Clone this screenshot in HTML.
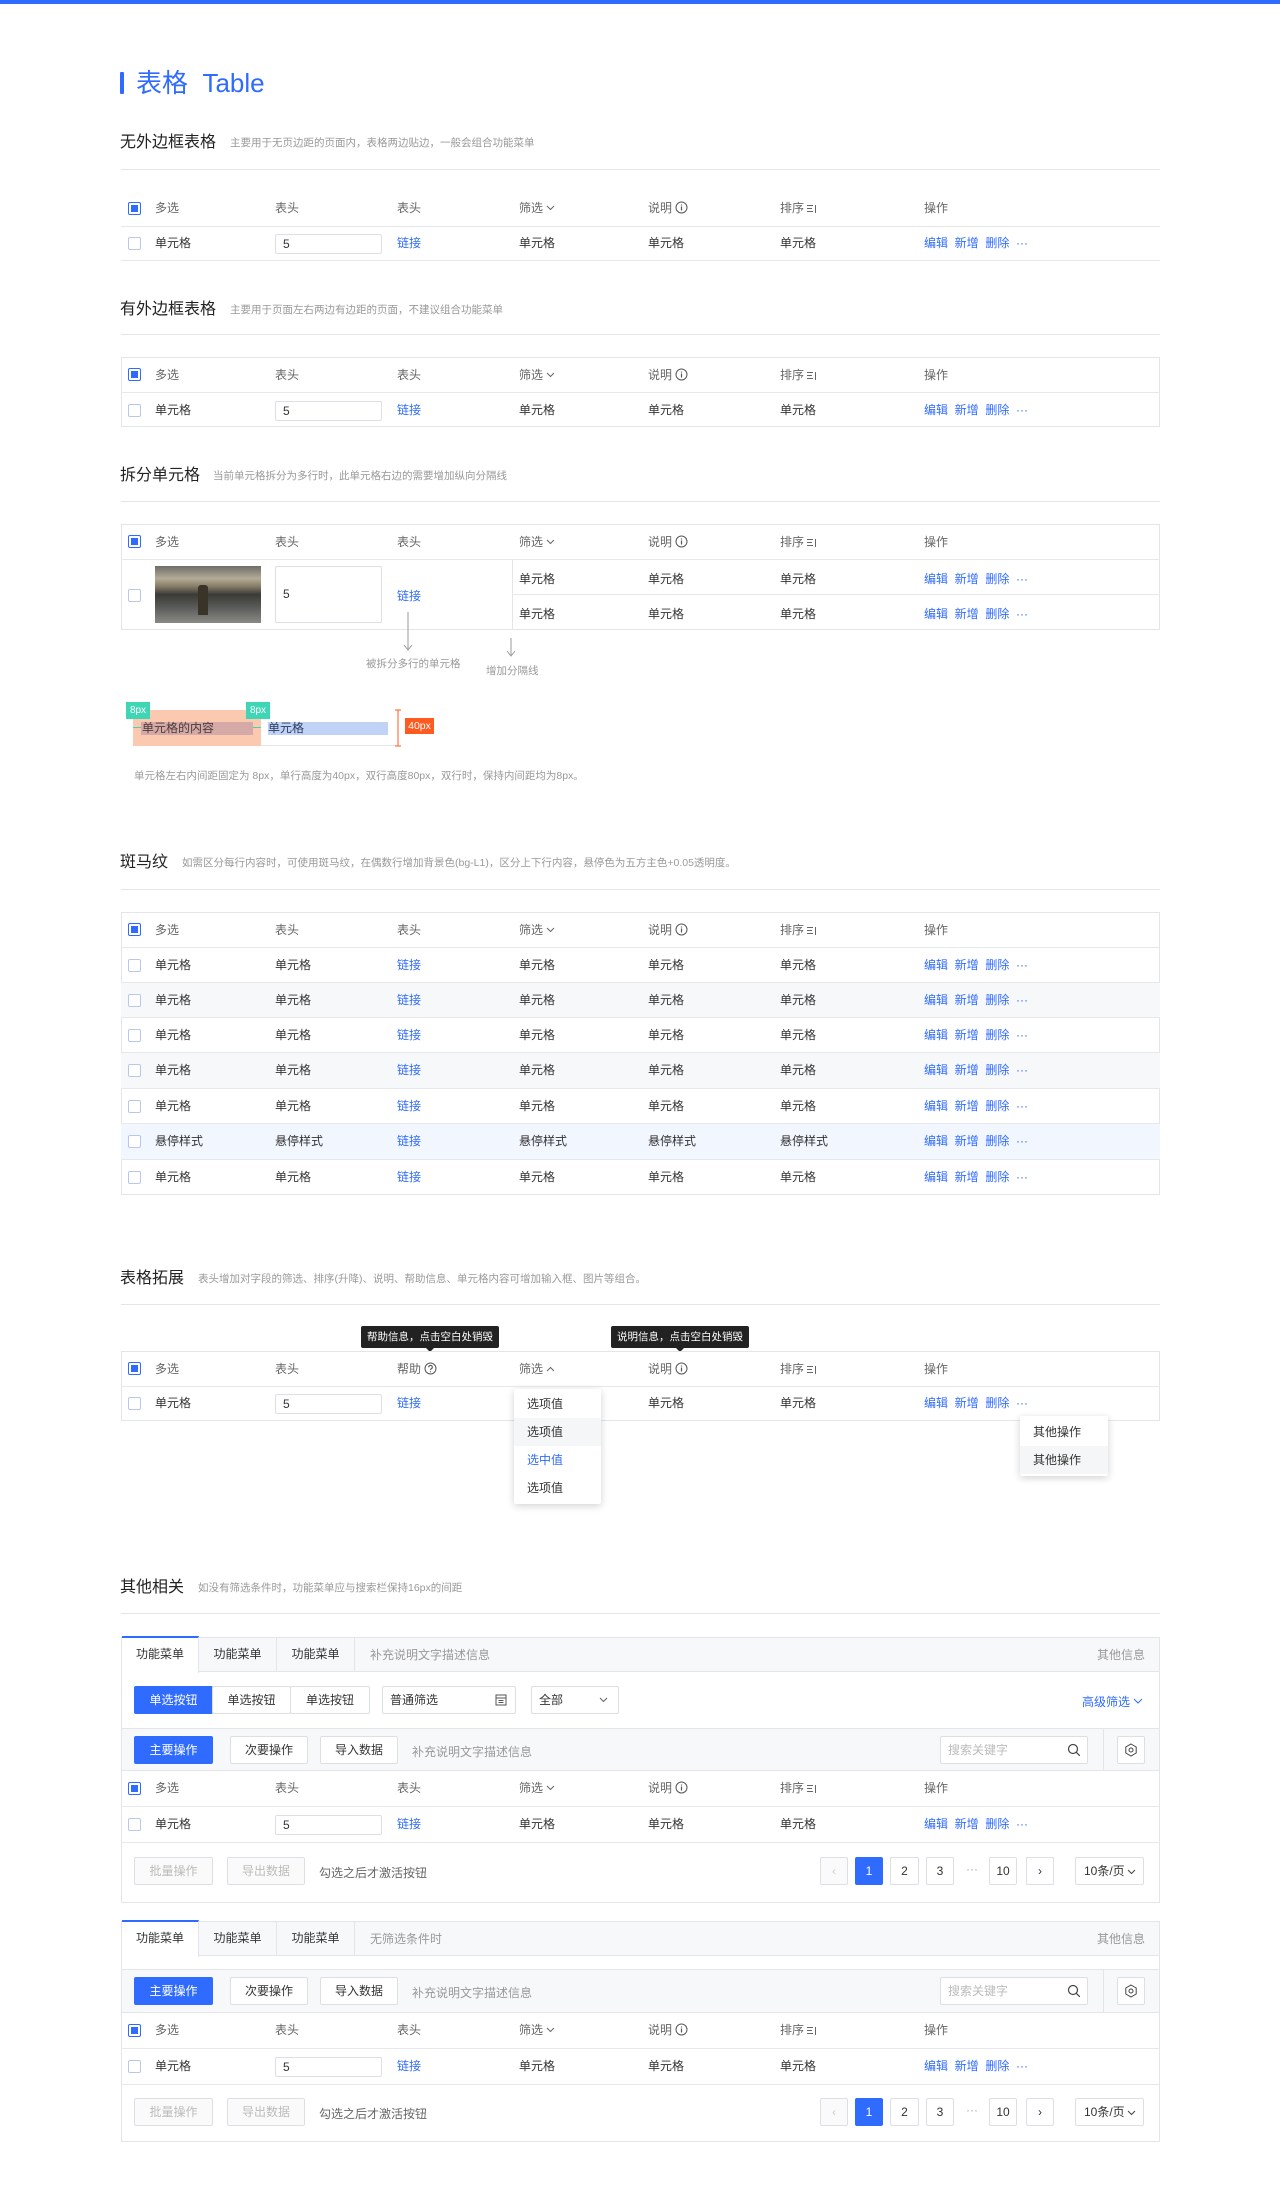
<!DOCTYPE html>
<html><head><meta charset="utf-8">
<style>
*{box-sizing:border-box;margin:0;padding:0}
body{width:1280px;height:2212px;position:relative;background:#fff;font-family:"Liberation Sans","Noto Sans CJK SC",sans-serif;color:#333;font-size:12px;overflow:hidden}
.a{position:absolute}
.topbar{left:0;top:0;width:1280px;height:4px;background:#2f6bff}
.h2{font-size:16px;color:#222;white-space:nowrap}
.desc{font-size:10.5px;color:#999;white-space:nowrap}
.hl{height:1px;background:#e3e5e8;left:121px;width:1039px}
.row{position:absolute;left:121px;width:1039px;border-bottom:1px solid #e6e8eb}
.row span.c{position:absolute;top:0;white-space:nowrap}
.hd span.c{color:#666}
.cb{position:absolute;left:7px;width:13px;height:13px;border:1px solid #b9c8ea;border-radius:2px;background:#fff}
.cb.on{border-color:#2f6bff}
.cb.on:after{content:"";position:absolute;left:2px;top:2px;width:7px;height:7px;background:#2f6bff}
.lk{color:#2f6bff}
.box{position:absolute;border:1px solid #e3e5e8}
.inp{position:absolute;border:1px solid #dcdfe4;border-radius:2px;background:#fff;padding-left:7px;font-size:12px;color:#333}
.btn{position:absolute;border:1px solid #dcdfe4;border-radius:2px;background:#fff;text-align:center;font-size:12px;color:#333;line-height:26px;height:28px}
.btn.p{background:#2f6bff;border-color:#2f6bff;color:#fff}
.btn.d{color:#bbb;background:#fafafa}
.tip{position:absolute;background:#222;color:#fff;font-size:10.5px;line-height:22px;height:22px;padding:0 6px;border-radius:2px;white-space:nowrap}
.tip:after{content:"";position:absolute;left:50%;margin-left:-4px;bottom:-4px;border:4px solid transparent;border-bottom:0;border-top-color:#222}
.dd{position:absolute;background:#fff;box-shadow:0 2px 8px rgba(0,0,0,.18);border-radius:2px}
.dd div{height:28px;line-height:28px;padding-left:13px;font-size:12px;color:#333}
svg{position:absolute}
</style></head><body>
<div class="a topbar"></div>
<div class="a" style="left:120px;top:72px;width:4px;height:22px;background:#2f6bff;border-radius:1px"></div>
<div class="a" style="left:136px;top:66px;font-size:26px;color:#2f6bff;line-height:34px;white-space:nowrap">表格&nbsp;&nbsp;Table</div>

<div class="a h2" style="left:120px;top:128px">无外边框表格</div><div class="a desc" style="left:230px;top:135px">主要用于无页边距的页面内，表格两边贴边，一般会组合功能菜单</div>
<div class="a hl" style="top:169px"></div>
<div class="a h2" style="left:120px;top:295px">有外边框表格</div><div class="a desc" style="left:230px;top:302px">主要用于页面左右两边有边距的页面，不建议组合功能菜单</div>
<div class="a hl" style="top:334px"></div>
<div class="a h2" style="left:120px;top:461px">拆分单元格</div><div class="a desc" style="left:213px;top:468px">当前单元格拆分为多行时，此单元格右边的需要增加纵向分隔线</div>
<div class="a hl" style="top:501px"></div>
<div class="a h2" style="left:120px;top:848px">斑马纹</div><div class="a desc" style="left:182px;top:855px">如需区分每行内容时，可使用斑马纹，在偶数行增加背景色(bg-L1)，区分上下行内容，悬停色为五方主色+0.05透明度。</div>
<div class="a hl" style="top:889px"></div>
<div class="a h2" style="left:120px;top:1264px">表格拓展</div><div class="a desc" style="left:198px;top:1271px">表头增加对字段的筛选、排序(升降)、说明、帮助信息、单元格内容可增加输入框、图片等组合。</div>
<div class="a hl" style="top:1304px"></div>
<div class="a h2" style="left:120px;top:1573px">其他相关</div><div class="a desc" style="left:198px;top:1580px">如没有筛选条件时，功能菜单应与搜索栏保持16px的间距</div>
<div class="a hl" style="top:1613px"></div>

<!-- Table 1 -->
<div class="row hd" style="top:191px;height:36px;line-height:35px"><i class="cb on" style="top:11px"></i><span class="c" style="left:34px">多选</span><span class="c" style="left:154px">表头</span><span class="c" style="left:276px">表头</span><span class="c" style="left:398px">筛选 <svg style="position:relative;display:inline-block;top:-1px" width="9" height="6"><path d="M1 1l3.5 3.5L8 1" fill="none" stroke="#666"/></svg></span><span class="c" style="left:527px">说明 <svg style="position:relative;display:inline-block;top:2px" width="13" height="13"><circle cx="6.5" cy="6.5" r="5.5" fill="none" stroke="#555"/><path d="M6.5 5.5v4M6.5 3.5v1" stroke="#555" stroke-width="1.2"/></svg></span><span class="c" style="left:659px">排序 <svg style="position:relative;display:inline-block;top:1px" width="10" height="9"><path d="M0 1.5h6M0 4.5h5M0 7.5h6M8.5 1v8" stroke="#666"/></svg></span><span class="c" style="left:803px">操作</span></div>
<div class="row" style="top:227px;height:34px;line-height:33px"><i class="cb" style="top:10px"></i><span class="c" style="left:34px">单元格</span><div class="inp" style="left:154px;top:7px;width:107px;height:20px;line-height:18px">5</div><span class="c lk" style="left:276px">链接</span><span class="c" style="left:398px">单元格</span><span class="c" style="left:527px">单元格</span><span class="c" style="left:659px">单元格</span><span class="c lk" style="left:803px">编辑&nbsp;&nbsp;新增&nbsp;&nbsp;删除&nbsp;&nbsp;···</span></div>

<!-- Table 2 -->
<div class="box" style="left:121px;top:357px;width:1039px;height:70px"></div>
<div class="row hd" style="top:358px;height:35px;line-height:34px"><i class="cb on" style="top:10px"></i><span class="c" style="left:34px">多选</span><span class="c" style="left:154px">表头</span><span class="c" style="left:276px">表头</span><span class="c" style="left:398px">筛选 <svg style="position:relative;display:inline-block;top:-1px" width="9" height="6"><path d="M1 1l3.5 3.5L8 1" fill="none" stroke="#666"/></svg></span><span class="c" style="left:527px">说明 <svg style="position:relative;display:inline-block;top:2px" width="13" height="13"><circle cx="6.5" cy="6.5" r="5.5" fill="none" stroke="#555"/><path d="M6.5 5.5v4M6.5 3.5v1" stroke="#555" stroke-width="1.2"/></svg></span><span class="c" style="left:659px">排序 <svg style="position:relative;display:inline-block;top:1px" width="10" height="9"><path d="M0 1.5h6M0 4.5h5M0 7.5h6M8.5 1v8" stroke="#666"/></svg></span><span class="c" style="left:803px">操作</span></div>
<div class="row" style="top:393px;height:34px;line-height:34px;border-bottom:0"><i class="cb" style="top:11px"></i><span class="c" style="left:34px">单元格</span><div class="inp" style="left:154px;top:8px;width:107px;height:20px;line-height:18px">5</div><span class="c lk" style="left:276px">链接</span><span class="c" style="left:398px">单元格</span><span class="c" style="left:527px">单元格</span><span class="c" style="left:659px">单元格</span><span class="c lk" style="left:803px">编辑&nbsp;&nbsp;新增&nbsp;&nbsp;删除&nbsp;&nbsp;···</span></div>

<!-- Table 3 split -->
<div class="box" style="left:121px;top:524px;width:1039px;height:106px"></div>
<div class="row hd" style="top:525px;height:35px;line-height:34px"><i class="cb on" style="top:10px"></i><span class="c" style="left:34px">多选</span><span class="c" style="left:154px">表头</span><span class="c" style="left:276px">表头</span><span class="c" style="left:398px">筛选 <svg style="position:relative;display:inline-block;top:-1px" width="9" height="6"><path d="M1 1l3.5 3.5L8 1" fill="none" stroke="#666"/></svg></span><span class="c" style="left:527px">说明 <svg style="position:relative;display:inline-block;top:2px" width="13" height="13"><circle cx="6.5" cy="6.5" r="5.5" fill="none" stroke="#555"/><path d="M6.5 5.5v4M6.5 3.5v1" stroke="#555" stroke-width="1.2"/></svg></span><span class="c" style="left:659px">排序 <svg style="position:relative;display:inline-block;top:1px" width="10" height="9"><path d="M0 1.5h6M0 4.5h5M0 7.5h6M8.5 1v8" stroke="#666"/></svg></span><span class="c" style="left:803px">操作</span></div>
<i class="cb" style="left:128px;top:589px"></i>
<div class="a" style="left:155px;top:566px;width:106px;height:57px;background:linear-gradient(180deg,#6e6c66 0%,#b3ab98 22%,#8a8068 35%,#3a3a36 50%,#5a5a58 72%,#8a8a86 100%)"></div>
<div class="a" style="left:198px;top:585px;width:10px;height:30px;background:#3a3428;border-radius:3px 3px 0 0"></div>
<div class="inp" style="left:275px;top:566px;width:107px;height:57px;line-height:55px">5</div>
<div class="a lk" style="left:397px;top:587px">链接</div>
<div class="a" style="left:512px;top:559px;width:1px;height:70px;background:#e3e5e8"></div>
<div class="a" style="left:512px;top:594px;width:648px;height:1px;background:#e6e8eb"></div>
<div class="a" style="left:519px;top:570px">单元格</div><div class="a" style="left:648px;top:570px">单元格</div><div class="a" style="left:780px;top:570px">单元格</div><div class="a lk" style="left:924px;top:570px;white-space:nowrap">编辑&nbsp;&nbsp;新增&nbsp;&nbsp;删除&nbsp;&nbsp;···</div>
<div class="a" style="left:519px;top:605px">单元格</div><div class="a" style="left:648px;top:605px">单元格</div><div class="a" style="left:780px;top:605px">单元格</div><div class="a lk" style="left:924px;top:605px;white-space:nowrap">编辑&nbsp;&nbsp;新增&nbsp;&nbsp;删除&nbsp;&nbsp;···</div>
<svg style="left:403px;top:612px" width="10" height="40"><path d="M5 0v38M1 33l4 5 4-5" fill="none" stroke="#999"/></svg>
<div class="a desc" style="left:366px;top:656px;color:#999">被拆分多行的单元格</div>
<svg style="left:506px;top:638px" width="10" height="20"><path d="M5 0v18M1 13l4 5 4-5" fill="none" stroke="#999"/></svg>
<div class="a desc" style="left:486px;top:663px">增加分隔线</div>

<!-- spacing diagram -->
<div class="a" style="left:133px;top:710px;width:128px;height:36px;background:#fbc9b0"></div>
<div class="a" style="left:141px;top:722px;width:112px;height:13px;background:#d4a9a6"></div>
<div class="a" style="left:142px;top:719px;font-size:12px;color:#4a3a3a">单元格的内容</div>
<div class="a" style="left:268px;top:722px;width:120px;height:13px;background:#c0d3f7"></div>
<div class="a" style="left:268px;top:719px;font-size:12px;color:#2a3a60">单元格</div>
<div class="a" style="left:261px;top:745px;width:135px;height:1px;background:#e3e5e8"></div>
<div class="a" style="left:126px;top:702px;width:24px;height:17px;background:#3ed6b4;color:#fff;font-size:10px;line-height:17px;text-align:center">8px</div>
<div class="a" style="left:246px;top:702px;width:24px;height:17px;background:#3ed6b4;color:#fff;font-size:10px;line-height:17px;text-align:center">8px</div>
<div class="a" style="left:133px;top:727px;width:8px;height:1px;background:#3ed6b4"></div>
<div class="a" style="left:253px;top:727px;width:8px;height:1px;background:#3ed6b4"></div>
<svg style="left:394px;top:709px" width="8" height="38"><path d="M4 1v36M1 1h6M1 37h6" stroke="#ff5a1f"/></svg>
<div class="a" style="left:405px;top:718px;width:29px;height:16px;background:#ff5a1f;color:#fff;font-size:10.5px;line-height:16px;text-align:center">40px</div>
<div class="a desc" style="left:134px;top:768px">单元格左右内间距固定为 8px，单行高度为40px，双行高度80px，双行时，保持内间距均为8px。</div>

<!-- Table 4 zebra -->
<div class="box" style="left:121px;top:912px;width:1039px;height:283px"></div>
<div class="row hd" style="top:913px;height:35px;line-height:34px"><i class="cb on" style="top:10px"></i><span class="c" style="left:34px">多选</span><span class="c" style="left:154px">表头</span><span class="c" style="left:276px">表头</span><span class="c" style="left:398px">筛选 <svg style="position:relative;display:inline-block;top:-1px" width="9" height="6"><path d="M1 1l3.5 3.5L8 1" fill="none" stroke="#666"/></svg></span><span class="c" style="left:527px">说明 <svg style="position:relative;display:inline-block;top:2px" width="13" height="13"><circle cx="6.5" cy="6.5" r="5.5" fill="none" stroke="#555"/><path d="M6.5 5.5v4M6.5 3.5v1" stroke="#555" stroke-width="1.2"/></svg></span><span class="c" style="left:659px">排序 <svg style="position:relative;display:inline-block;top:1px" width="10" height="9"><path d="M0 1.5h6M0 4.5h5M0 7.5h6M8.5 1v8" stroke="#666"/></svg></span><span class="c" style="left:803px">操作</span></div>
<div class="row" style="top:948px;height:35px;line-height:34px"><i class="cb" style="top:11px"></i><span class="c" style="left:34px">单元格</span><span class="c" style="left:154px">单元格</span><span class="c lk" style="left:276px">链接</span><span class="c" style="left:398px">单元格</span><span class="c" style="left:527px">单元格</span><span class="c" style="left:659px">单元格</span><span class="c lk" style="left:803px">编辑&nbsp;&nbsp;新增&nbsp;&nbsp;删除&nbsp;&nbsp;···</span></div>
<div class="row" style="top:983px;height:35px;line-height:34px;background:#f7f8fa"><i class="cb" style="top:11px"></i><span class="c" style="left:34px">单元格</span><span class="c" style="left:154px">单元格</span><span class="c lk" style="left:276px">链接</span><span class="c" style="left:398px">单元格</span><span class="c" style="left:527px">单元格</span><span class="c" style="left:659px">单元格</span><span class="c lk" style="left:803px">编辑&nbsp;&nbsp;新增&nbsp;&nbsp;删除&nbsp;&nbsp;···</span></div>
<div class="row" style="top:1018px;height:35px;line-height:34px"><i class="cb" style="top:11px"></i><span class="c" style="left:34px">单元格</span><span class="c" style="left:154px">单元格</span><span class="c lk" style="left:276px">链接</span><span class="c" style="left:398px">单元格</span><span class="c" style="left:527px">单元格</span><span class="c" style="left:659px">单元格</span><span class="c lk" style="left:803px">编辑&nbsp;&nbsp;新增&nbsp;&nbsp;删除&nbsp;&nbsp;···</span></div>
<div class="row" style="top:1053px;height:36px;line-height:35px;background:#f7f8fa"><i class="cb" style="top:11px"></i><span class="c" style="left:34px">单元格</span><span class="c" style="left:154px">单元格</span><span class="c lk" style="left:276px">链接</span><span class="c" style="left:398px">单元格</span><span class="c" style="left:527px">单元格</span><span class="c" style="left:659px">单元格</span><span class="c lk" style="left:803px">编辑&nbsp;&nbsp;新增&nbsp;&nbsp;删除&nbsp;&nbsp;···</span></div>
<div class="row" style="top:1089px;height:35px;line-height:34px"><i class="cb" style="top:11px"></i><span class="c" style="left:34px">单元格</span><span class="c" style="left:154px">单元格</span><span class="c lk" style="left:276px">链接</span><span class="c" style="left:398px">单元格</span><span class="c" style="left:527px">单元格</span><span class="c" style="left:659px">单元格</span><span class="c lk" style="left:803px">编辑&nbsp;&nbsp;新增&nbsp;&nbsp;删除&nbsp;&nbsp;···</span></div>
<div class="row" style="top:1124px;height:36px;line-height:35px;background:#f2f6ff"><i class="cb" style="top:11px"></i><span class="c" style="left:34px">悬停样式</span><span class="c" style="left:154px">悬停样式</span><span class="c lk" style="left:276px">链接</span><span class="c" style="left:398px">悬停样式</span><span class="c" style="left:527px">悬停样式</span><span class="c" style="left:659px">悬停样式</span><span class="c lk" style="left:803px">编辑&nbsp;&nbsp;新增&nbsp;&nbsp;删除&nbsp;&nbsp;···</span></div>
<div class="row" style="top:1160px;height:35px;line-height:34px;border-bottom:0"><i class="cb" style="top:11px"></i><span class="c" style="left:34px">单元格</span><span class="c" style="left:154px">单元格</span><span class="c lk" style="left:276px">链接</span><span class="c" style="left:398px">单元格</span><span class="c" style="left:527px">单元格</span><span class="c" style="left:659px">单元格</span><span class="c lk" style="left:803px">编辑&nbsp;&nbsp;新增&nbsp;&nbsp;删除&nbsp;&nbsp;···</span></div>

<!-- Table 5 extension -->
<div class="tip" style="left:361px;top:1326px">帮助信息，点击空白处销毁</div>
<div class="tip" style="left:611px;top:1326px">说明信息，点击空白处销毁</div>
<div class="box" style="left:121px;top:1351px;width:1039px;height:70px"></div>
<div class="row hd" style="top:1352px;height:35px;line-height:34px"><i class="cb on" style="top:10px"></i><span class="c" style="left:34px">多选</span><span class="c" style="left:154px">表头</span><span class="c" style="left:276px">帮助 <svg style="position:relative;display:inline-block;top:2px" width="13" height="13"><circle cx="6.5" cy="6.5" r="5.5" fill="none" stroke="#555"/><path d="M4.7 5.2a1.8 1.8 0 1 1 2.6 1.6c-.6.3-.8.6-.8 1.3M6.5 9.3v1" fill="none" stroke="#555" stroke-width="1.1"/></svg></span><span class="c" style="left:398px">筛选 <svg style="position:relative;display:inline-block;top:-1px" width="9" height="6"><path d="M1 5l3.5-3.5L8 5" fill="none" stroke="#666"/></svg></span><span class="c" style="left:527px">说明 <svg style="position:relative;display:inline-block;top:2px" width="13" height="13"><circle cx="6.5" cy="6.5" r="5.5" fill="none" stroke="#555"/><path d="M6.5 5.5v4M6.5 3.5v1" stroke="#555" stroke-width="1.2"/></svg></span><span class="c" style="left:659px">排序 <svg style="position:relative;display:inline-block;top:1px" width="10" height="9"><path d="M0 1.5h6M0 4.5h5M0 7.5h6M8.5 1v8" stroke="#666"/></svg></span><span class="c" style="left:803px">操作</span></div>
<div class="row" style="top:1386px;height:34px;line-height:34px;border-bottom:0"><i class="cb" style="top:11px"></i><span class="c" style="left:34px">单元格</span><div class="inp" style="left:154px;top:8px;width:107px;height:20px;line-height:18px">5</div><span class="c lk" style="left:276px">链接</span><span class="c" style="left:527px">单元格</span><span class="c" style="left:659px">单元格</span><span class="c lk" style="left:803px">编辑&nbsp;&nbsp;新增&nbsp;&nbsp;删除&nbsp;&nbsp;···</span></div>
<div class="dd" style="left:514px;top:1389px;width:87px;height:115px;padding-top:1px"><div>选项值</div><div style="background:#f5f6f7">选项值</div><div style="color:#2f6bff">选中值</div><div>选项值</div></div>
<div class="dd" style="left:1020px;top:1416px;width:88px;height:60px;padding-top:2px"><div>其他操作</div><div style="background:#f5f6f7">其他操作</div></div>

<!-- Panel 1 -->
<div class="box" style="left:121px;top:1637px;width:1039px;height:266px"></div>
<div class="a" style="left:122px;top:1638px;width:1037px;height:34px;background:#f7f8fa;border-bottom:1px solid #e3e5e8"></div>
<div class="a" style="left:122px;top:1636px;width:77px;height:37px;background:#fff;border-top:2px solid #2f6bff;border-right:1px solid #e3e5e8;text-align:center;line-height:33px">功能菜单</div>
<div class="a" style="left:199px;top:1638px;width:78px;height:34px;border-right:1px solid #e3e5e8;text-align:center;line-height:33px">功能菜单</div>
<div class="a" style="left:277px;top:1638px;width:78px;height:34px;border-right:1px solid #e3e5e8;text-align:center;line-height:33px">功能菜单</div>
<div class="a" style="left:370px;top:1646px;color:#999">补充说明文字描述信息</div>
<div class="a" style="left:1097px;top:1646px;color:#999">其他信息</div>
<div class="btn p" style="left:134px;top:1686px;width:79px">单选按钮</div>
<div class="btn" style="left:212px;top:1686px;width:79px">单选按钮</div>
<div class="btn" style="left:290px;top:1686px;width:80px">单选按钮</div>
<div class="inp" style="left:382px;top:1686px;width:134px;height:28px;line-height:26px">普通筛选</div>
<svg style="left:495px;top:1694px" width="12" height="12"><rect x="1" y="1" width="10" height="10" fill="none" stroke="#555"/><path d="M1 4h10M3.5 6.5h5M3.5 8.5h5" stroke="#555"/></svg>
<div class="inp" style="left:531px;top:1686px;width:88px;height:28px;line-height:26px">全部</div>
<svg style="left:599px;top:1697px" width="9" height="6"><path d="M1 1l3.5 3.5L8 1" fill="none" stroke="#666"/></svg>
<div class="a lk" style="left:1082px;top:1693px">高级筛选</div>
<svg style="left:1133px;top:1698px" width="10" height="6"><path d="M1 1l4 4 4-4" fill="none" stroke="#2f6bff"/></svg>
<div class="a" style="left:122px;top:1728px;width:1037px;height:43px;background:#f7f8fa;border-top:1px solid #e3e5e8;border-bottom:1px solid #e3e5e8"></div>
<div class="btn p" style="left:134px;top:1736px;width:79px">主要操作</div>
<div class="btn" style="left:230px;top:1736px;width:78px">次要操作</div>
<div class="btn" style="left:320px;top:1736px;width:78px">导入数据</div>
<div class="a" style="left:412px;top:1743px;color:#999">补充说明文字描述信息</div>
<div class="inp" style="left:940px;top:1736px;width:148px;height:28px;line-height:26px;color:#bbb">搜索关键字</div>
<svg style="left:1067px;top:1743px" width="14" height="14"><circle cx="6" cy="6" r="4.5" fill="none" stroke="#444" stroke-width="1.2"/><path d="M9.3 9.3l3.5 3.5" stroke="#444" stroke-width="1.2"/></svg>
<div class="a" style="left:1103px;top:1729px;width:1px;height:41px;background:#e3e5e8"></div>
<div class="btn" style="left:1117px;top:1736px;width:28px"></div>
<svg style="left:1124px;top:1743px" width="14" height="14"><path d="M7 1l5.2 3v6L7 13 1.8 10V4z" fill="none" stroke="#444"/><circle cx="7" cy="7" r="2" fill="none" stroke="#444"/></svg>
<div class="row hd" style="top:1771px;height:36px;line-height:35px"><i class="cb on" style="top:11px"></i><span class="c" style="left:34px">多选</span><span class="c" style="left:154px">表头</span><span class="c" style="left:276px">表头</span><span class="c" style="left:398px">筛选 <svg style="position:relative;display:inline-block;top:-1px" width="9" height="6"><path d="M1 1l3.5 3.5L8 1" fill="none" stroke="#666"/></svg></span><span class="c" style="left:527px">说明 <svg style="position:relative;display:inline-block;top:2px" width="13" height="13"><circle cx="6.5" cy="6.5" r="5.5" fill="none" stroke="#555"/><path d="M6.5 5.5v4M6.5 3.5v1" stroke="#555" stroke-width="1.2"/></svg></span><span class="c" style="left:659px">排序 <svg style="position:relative;display:inline-block;top:1px" width="10" height="9"><path d="M0 1.5h6M0 4.5h5M0 7.5h6M8.5 1v8" stroke="#666"/></svg></span><span class="c" style="left:803px">操作</span></div>
<div class="row" style="top:1807px;height:36px;line-height:35px"><i class="cb" style="top:11px"></i><span class="c" style="left:34px">单元格</span><div class="inp" style="left:154px;top:8px;width:107px;height:20px;line-height:18px">5</div><span class="c lk" style="left:276px">链接</span><span class="c" style="left:398px">单元格</span><span class="c" style="left:527px">单元格</span><span class="c" style="left:659px">单元格</span><span class="c lk" style="left:803px">编辑&nbsp;&nbsp;新增&nbsp;&nbsp;删除&nbsp;&nbsp;···</span></div>
<div class="btn d" style="left:134px;top:1857px;width:79px">批量操作</div>
<div class="btn d" style="left:227px;top:1857px;width:78px">导出数据</div>
<div class="a" style="left:319px;top:1864px;color:#666">勾选之后才激活按钮</div>
<div class="btn d" style="left:820px;top:1857px;width:28px;color:#ccc">‹</div>
<div class="btn p" style="left:855px;top:1857px;width:28px">1</div>
<div class="btn" style="left:890px;top:1857px;width:29px">2</div>
<div class="btn" style="left:926px;top:1857px;width:28px">3</div>
<div class="a" style="left:966px;top:1862px;color:#aaa">···</div>
<div class="btn" style="left:989px;top:1857px;width:28px">10</div>
<div class="btn" style="left:1026px;top:1857px;width:28px">›</div>
<div class="btn" style="left:1075px;top:1857px;width:69px;text-align:left;padding-left:8px">10条/页</div>
<svg style="left:1127px;top:1869px" width="9" height="6"><path d="M1 1l3.5 3.5L8 1" fill="none" stroke="#444"/></svg>

<!-- Panel 2 -->
<div class="box" style="left:121px;top:1921px;width:1039px;height:221px"></div>
<div class="a" style="left:122px;top:1922px;width:1037px;height:34px;background:#f7f8fa;border-bottom:1px solid #e3e5e8"></div>
<div class="a" style="left:122px;top:1920px;width:77px;height:37px;background:#fff;border-top:2px solid #2f6bff;border-right:1px solid #e3e5e8;text-align:center;line-height:33px">功能菜单</div>
<div class="a" style="left:199px;top:1922px;width:78px;height:34px;border-right:1px solid #e3e5e8;text-align:center;line-height:33px">功能菜单</div>
<div class="a" style="left:277px;top:1922px;width:78px;height:34px;border-right:1px solid #e3e5e8;text-align:center;line-height:33px">功能菜单</div>
<div class="a" style="left:370px;top:1930px;color:#999">无筛选条件时</div>
<div class="a" style="left:1097px;top:1930px;color:#999">其他信息</div>
<div class="a" style="left:122px;top:1969px;width:1037px;height:44px;background:#f7f8fa;border-top:1px solid #e3e5e8;border-bottom:1px solid #e3e5e8"></div>
<div class="btn p" style="left:134px;top:1977px;width:79px">主要操作</div>
<div class="btn" style="left:230px;top:1977px;width:78px">次要操作</div>
<div class="btn" style="left:320px;top:1977px;width:78px">导入数据</div>
<div class="a" style="left:412px;top:1984px;color:#999">补充说明文字描述信息</div>
<div class="inp" style="left:940px;top:1977px;width:148px;height:28px;line-height:26px;color:#bbb">搜索关键字</div>
<svg style="left:1067px;top:1984px" width="14" height="14"><circle cx="6" cy="6" r="4.5" fill="none" stroke="#444" stroke-width="1.2"/><path d="M9.3 9.3l3.5 3.5" stroke="#444" stroke-width="1.2"/></svg>
<div class="a" style="left:1103px;top:1970px;width:1px;height:42px;background:#e3e5e8"></div>
<div class="btn" style="left:1117px;top:1977px;width:28px"></div>
<svg style="left:1124px;top:1984px" width="14" height="14"><path d="M7 1l5.2 3v6L7 13 1.8 10V4z" fill="none" stroke="#444"/><circle cx="7" cy="7" r="2" fill="none" stroke="#444"/></svg>
<div class="row hd" style="top:2013px;height:36px;line-height:35px"><i class="cb on" style="top:11px"></i><span class="c" style="left:34px">多选</span><span class="c" style="left:154px">表头</span><span class="c" style="left:276px">表头</span><span class="c" style="left:398px">筛选 <svg style="position:relative;display:inline-block;top:-1px" width="9" height="6"><path d="M1 1l3.5 3.5L8 1" fill="none" stroke="#666"/></svg></span><span class="c" style="left:527px">说明 <svg style="position:relative;display:inline-block;top:2px" width="13" height="13"><circle cx="6.5" cy="6.5" r="5.5" fill="none" stroke="#555"/><path d="M6.5 5.5v4M6.5 3.5v1" stroke="#555" stroke-width="1.2"/></svg></span><span class="c" style="left:659px">排序 <svg style="position:relative;display:inline-block;top:1px" width="10" height="9"><path d="M0 1.5h6M0 4.5h5M0 7.5h6M8.5 1v8" stroke="#666"/></svg></span><span class="c" style="left:803px">操作</span></div>
<div class="row" style="top:2049px;height:36px;line-height:35px"><i class="cb" style="top:11px"></i><span class="c" style="left:34px">单元格</span><div class="inp" style="left:154px;top:8px;width:107px;height:20px;line-height:18px">5</div><span class="c lk" style="left:276px">链接</span><span class="c" style="left:398px">单元格</span><span class="c" style="left:527px">单元格</span><span class="c" style="left:659px">单元格</span><span class="c lk" style="left:803px">编辑&nbsp;&nbsp;新增&nbsp;&nbsp;删除&nbsp;&nbsp;···</span></div>
<div class="btn d" style="left:134px;top:2098px;width:79px">批量操作</div>
<div class="btn d" style="left:227px;top:2098px;width:78px">导出数据</div>
<div class="a" style="left:319px;top:2105px;color:#666">勾选之后才激活按钮</div>
<div class="btn d" style="left:820px;top:2098px;width:28px;color:#ccc">‹</div>
<div class="btn p" style="left:855px;top:2098px;width:28px">1</div>
<div class="btn" style="left:890px;top:2098px;width:29px">2</div>
<div class="btn" style="left:926px;top:2098px;width:28px">3</div>
<div class="a" style="left:966px;top:2103px;color:#aaa">···</div>
<div class="btn" style="left:989px;top:2098px;width:28px">10</div>
<div class="btn" style="left:1026px;top:2098px;width:28px">›</div>
<div class="btn" style="left:1075px;top:2098px;width:69px;text-align:left;padding-left:8px">10条/页</div>
<svg style="left:1127px;top:2110px" width="9" height="6"><path d="M1 1l3.5 3.5L8 1" fill="none" stroke="#444"/></svg>
</body></html>
